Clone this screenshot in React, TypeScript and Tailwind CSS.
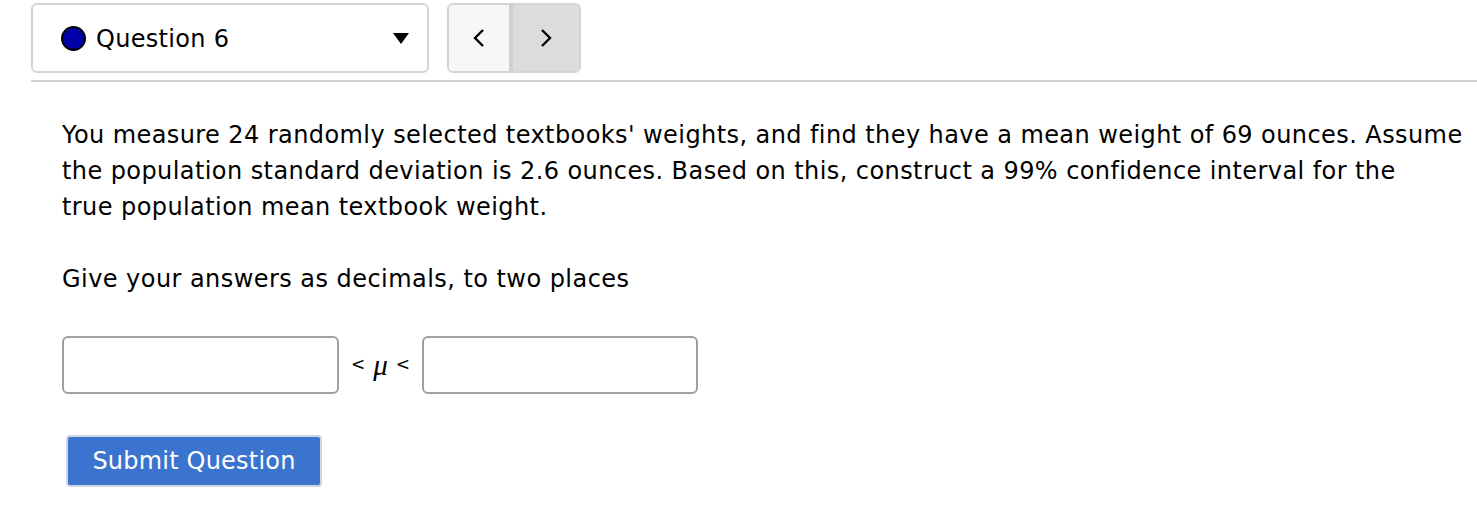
import React from "react";

export default function App() {
  const font = { fontFamily: '"DejaVu Sans", sans-serif' };
  return (
    <div className="w-[1477px] h-[507px] bg-white text-black overflow-hidden" style={font}>
      <div className="pl-[31px] pt-[3px]">
        <div className="flex items-start gap-[18px]">
          <div className="w-[398px] h-[70px] border-2 border-[#d4d4d4] rounded-[6px] flex items-center pl-[28px] pr-[18px]">
            <span className="w-[25px] h-[25px] rounded-full bg-[#0000a8] border-2 border-black shrink-0" />
            <span className="ml-[10px] text-[24px] leading-none mt-[2px] tracking-[0.3px]">Question 6</span>
            <span className="ml-auto">
              <svg width="16" height="11" viewBox="0 0 16 11"><path d="M0 0 H16 L8 11 Z" fill="#000" /></svg>
            </span>
          </div>
          <div className="w-[134px] h-[70px] border-2 border-[#d4d4d4] rounded-[6px] flex overflow-hidden">
            <div className="w-[64px] h-full bg-[#f7f7f7] border-r-[4px] border-[#cfcfcf] flex items-center justify-center">
              <svg width="12" height="20" viewBox="0 0 12 20"><path d="M10 2 L2 10 L10 18" fill="none" stroke="#000" strokeWidth="2.4" /></svg>
            </div>
            <div className="flex-1 h-full bg-[#dcdcdc] flex items-center justify-center">
              <svg width="12" height="20" viewBox="0 0 12 20"><path d="M2 2 L10 10 L2 18" fill="none" stroke="#000" strokeWidth="2.4" /></svg>
            </div>
          </div>
        </div>
        <div className="mt-[7px] h-[2px] bg-[#d0d0d0]" />
        <div className="pl-[31px] pt-[35px]">
          <p className="w-[1420px] text-[24px] leading-[36px] tracking-[0.42px]">
            You measure 24 randomly selected textbooks' weights, and find they have a mean weight of 69 ounces. Assume
            <br />
            the population standard deviation is 2.6 ounces. Based on this, construct a 99% confidence interval for the
            <br />
            true population mean textbook weight.
          </p>
          <p className="text-[24px] leading-[36px] mt-[36px] tracking-[0.45px]">Give your answers as decimals, to two places</p>
          <div className="mt-[39px] flex items-center">
            <div className="w-[277px] h-[58px] border-2 border-[#a0a0a0] rounded-[6px]" />
            <span className="w-[83px] flex items-center justify-center gap-[8px] text-[17px]">
              <span>&lt;</span>
              <span className="text-[29px] italic leading-none" style={{ fontFamily: '"Liberation Serif", serif' }}>μ</span>
              <span>&lt;</span>
            </span>
            <div className="w-[276px] h-[58px] border-2 border-[#a0a0a0] rounded-[6px]" />
          </div>
          <button className="mt-[41px] ml-[4px] w-[256px] h-[52px] bg-[#3b74cf] border-2 border-[#cfd6e0] rounded-[4px] text-white text-[24px] leading-none flex items-center justify-center tracking-[0.2px]" style={font}>
            Submit Question
          </button>
        </div>
      </div>
    </div>
  );
}
